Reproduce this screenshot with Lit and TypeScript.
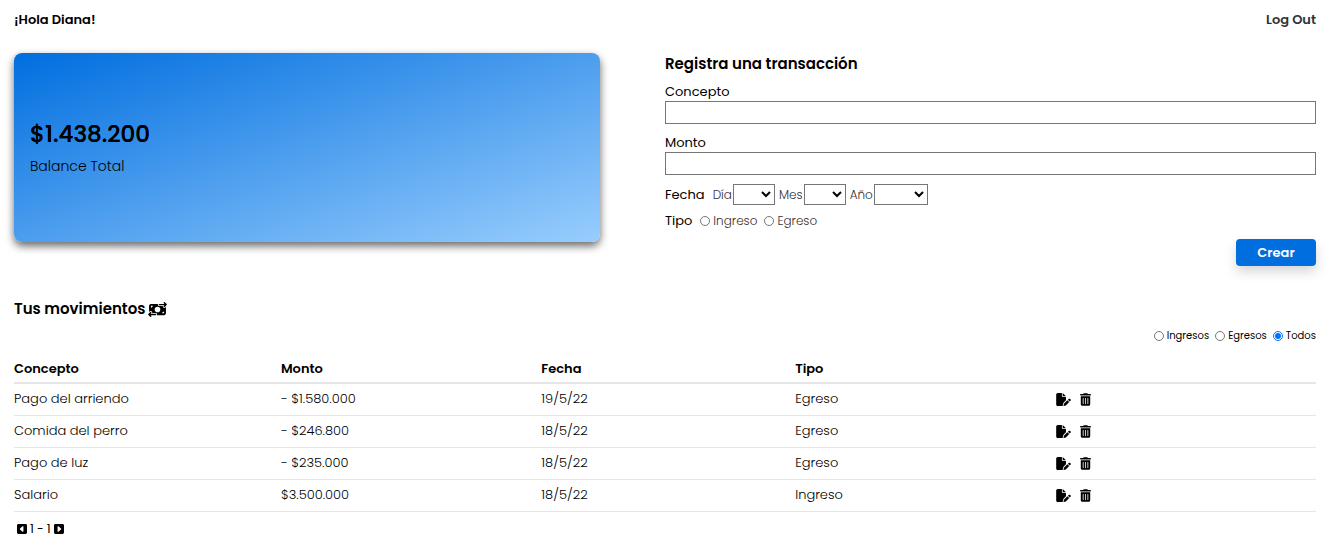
import { LitElement, html, css, svg } from "lit";
import { customElement, state } from "lit/decorators.js";

interface Movement {
  concept: string;
  amount: number;
  date: string;
  type: "Ingreso" | "Egreso";
}

const MOVEMENTS: Movement[] = [
  { concept: "Pago del arriendo", amount: 1580000, date: "19/5/22", type: "Egreso" },
  { concept: "Comida del perro", amount: 246800, date: "18/5/22", type: "Egreso" },
  { concept: "Pago de luz", amount: 235000, date: "18/5/22", type: "Egreso" },
  { concept: "Salario", amount: 3500000, date: "18/5/22", type: "Ingreso" },
];

const money = (value: number) =>
  "$" + String(value).replace(/\B(?=(\d{3})+(?!\d))/g, ".");

const transferIcon = svg`<svg class="icon-transfer" viewBox="0 0 640 512" aria-hidden="true"><path d="M535 41c-9.4-9.4-9.4-24.6 0-33.9s24.6-9.4 33.9 0l64 64c4.5 4.5 7 10.6 7 17s-2.5 12.5-7 17l-64 64c-9.4 9.4-24.6 9.4-33.9 0s-9.4-24.6 0-33.9l23-23L384 112c-13.3 0-24-10.7-24-24s10.7-24 24-24l174.1 0L535 41zM105 377l-23 23L256 400c13.3 0 24 10.7 24 24s-10.7 24-24 24L81.9 448l23 23c9.4 9.4 9.4 24.6 0 33.9s-24.6 9.4-33.9 0L7 441c-4.5-4.5-7-10.6-7-17s2.5-12.5 7-17l64-64c9.4-9.4 24.6-9.4 33.9 0s9.4 24.6 0 33.9zM96 64H337.9c-3.7 7.2-5.9 15.3-5.9 24c0 28.7 23.3 52 52 52l117.4 0c-4 17 .6 35.5 13.8 48.8c20.3 20.3 53.2 20.3 73.5 0L608 169.5V384c0 35.3-28.7 64-64 64H302.1c3.7-7.2 5.9-15.3 5.9-24c0-28.7-23.3-52-52-52l-117.4 0c4-17-.6-35.5-13.8-48.8c-20.3-20.3-53.2-20.3-73.5 0L32 342.5V128c0-35.3 28.7-64 64-64zm64 64H96v64c35.3 0 64-28.7 64-64zM544 320c-35.3 0-64 28.7-64 64h64V320zM320 352a96 96 0 1 0 0-192 96 96 0 1 0 0 192z"/></svg>`;

const editIcon = svg`<svg class="icon-edit" viewBox="0 0 576 512" aria-hidden="true"><path d="M0 64C0 28.7 28.7 0 64 0H224V128c0 17.7 14.3 32 32 32H384V285.7l-86.8 86.8c-10.3 10.3-17.5 23.1-21 37.2l-18.7 74.9c-2.3 9.2-1.8 18.8 1.3 27.5H64c-35.3 0-64-28.7-64-64V64zm384 64H256V0L384 128zM549.8 235.7l14.4 14.4c15.6 15.6 15.6 40.9 0 56.6l-29.4 29.4-71-71 29.4-29.4c15.6-15.6 40.9-15.6 56.6 0zM311.9 417L441.1 287.8l71 71L382.9 487.9c-4.1 4.1-9.2 7-14.9 8.4l-60.1 15c-5.5 1.4-11.2-.2-15.2-4.2s-5.6-9.7-4.2-15.2l15-60.1c1.4-5.6 4.3-10.8 8.4-14.9z"/></svg>`;

const trashIcon = svg`<svg class="icon-trash" viewBox="0 0 448 512" aria-hidden="true"><path fill-rule="evenodd" d="M135.2 17.7C140.6 6.8 151.7 0 163.8 0H284.2c12.1 0 23.2 6.8 28.6 17.7L320 32h96c17.7 0 32 14.3 32 32s-14.3 32-32 32H32C14.3 96 0 81.7 0 64S14.3 32 32 32h96l7.2-14.3zM32 128H416V448c0 35.3-28.7 64-64 64H96c-35.3 0-64-28.7-64-64V128zm96 64c-8.8 0-16 7.2-16 16V432c0 8.8 7.2 16 16 16s16-7.2 16-16V208c0-8.8-7.2-16-16-16zm96 0c-8.8 0-16 7.2-16 16V432c0 8.8 7.2 16 16 16s16-7.2 16-16V208c0-8.8-7.2-16-16-16zm96 0c-8.8 0-16 7.2-16 16V432c0 8.8 7.2 16 16 16s16-7.2 16-16V208c0-8.8-7.2-16-16-16z"/></svg>`;

const previousIcon = svg`<svg class="icon-page" viewBox="0 0 448 448" aria-hidden="true"><path fill-rule="evenodd" d="M64 0H384a64 64 0 0 1 64 64V384a64 64 0 0 1-64 64H64a64 64 0 0 1-64-64V64A64 64 0 0 1 64 0zM128 224a24 24 0 0 0 8 18L248 346a24 24 0 0 0 40-18V120a24 24 0 0 0-40-18L136 206a24 24 0 0 0-8 18z"/></svg>`;

const nextIcon = svg`<svg class="icon-page" viewBox="0 0 448 448" aria-hidden="true"><path fill-rule="evenodd" d="M64 0H384a64 64 0 0 1 64 64V384a64 64 0 0 1-64 64H64a64 64 0 0 1-64-64V64A64 64 0 0 1 64 0zM320 224a24 24 0 0 0-8-18L200 102a24 24 0 0 0-40 18V328a24 24 0 0 0 40 18L312 242a24 24 0 0 0 8-18z"/></svg>`;

const range = (from: number, count: number) =>
  Array.from({ length: count }, (_, i) => from + i);

@customElement("app-root")
export class AppRoot extends LitElement {
  static styles = css`
    :host {
      display: block;
      padding: 10px 19px 10px 14px;
      font-family: Poppins, Inter, "Open Sans", sans-serif;
      font-size: 13px;
      line-height: 20px;
      color: #000;
      background: #fff;
    }
    *, *::before, *::after { box-sizing: border-box; }
    h1, h2, p { margin: 0; }
    button, input, select { font: inherit; color: inherit; }
    svg { display: block; fill: currentColor; }
    .top { display: flex; justify-content: space-between; }
    .greeting, .logout, .title, .create, .table th { font-weight: 600; }
    .greeting { font-size: 13px; }
    .logout { color: #333; text-decoration: none; }
    .summary {
      display: flex;
      justify-content: space-between;
      align-items: flex-start;
      margin-top: 23px;
    }
    .card {
      width: 45%;
      padding: 64px 16px;
      border-radius: 8px;
      background: linear-gradient(to bottom right, #006edf, #98cdfd);
      box-shadow: 0 4px 8px rgba(0, 0, 0, 0.6);
    }
    .total { font-size: 23px; line-height: 34px; font-weight: 500; text-shadow: 0 0 0 currentColor; }
    .total-label { margin-top: 4px; font-size: 14px; line-height: 23px; font-weight: 300; }
    .form { width: 50%; display: flex; flex-direction: column; }
    .title { font-size: 15px; line-height: 22px; }
    .field { display: flex; flex-direction: column; margin-top: 10px; }
    .title + .field { margin-top: 8px; }
    .field-label { line-height: 18px; }
    .text-input {
      width: 100%;
      height: 23px;
      padding: 1px 4px;
      border: 1px solid #767676;
      border-radius: 0;
      background: #fff;
    }
    .row {
      display: flex;
      align-items: center;
      font-size: 12px;
      font-weight: 300;
      color: #333;
    }
    .row .field-label { font-size: 13px; font-weight: 400; color: #000; margin-right: 8px; }
    .dates { margin-top: 9px; }
    .kinds { margin-top: 6px; }
    .part { display: flex; align-items: center; gap: 1px; margin-right: 4px; }
    .select {
      width: 42px;
      height: 21px;
      padding: 0;
      border: 1px solid #767676;
      border-radius: 0;
      background: #fff;
      color: #000;
    }
    .select-year { width: 54px; }
    .choice { display: flex; align-items: center; gap: 3px; margin-right: 7px; }
    .radio { width: 10px; height: 10px; margin: 0; }
    .create {
      align-self: flex-end;
      width: 80px;
      height: 27px;
      margin-top: 8px;
      padding: 0;
      border: 0;
      border-radius: 4px;
      background: #006edf;
      color: #fff;
      font-size: 13px;
      box-shadow: 0 6px 12px rgba(0, 0, 0, 0.16);
    }
    .movements-title { display: flex; align-items: center; gap: 3px; margin-top: 32px; }
    .icon-transfer { width: 19px; height: 15px; }
    .filters {
      display: flex;
      justify-content: flex-end;
      gap: 6px;
      margin-top: 8px;
      font-size: 10px;
      line-height: 16px;
    }
    .filter { display: flex; align-items: center; gap: 3px; }
    .table {
      width: 100%;
      margin-top: 11px;
      table-layout: fixed;
      border-collapse: collapse;
      text-align: left;
    }
    .table th { height: 28px; padding: 0; border-bottom: 2px solid #e6e6e6; }
    .table td { height: 32px; padding: 0; font-weight: 300; border-bottom: 1px solid #e6e6e6; }
    .col-concept { width: 20.5%; }
    .col-amount { width: 20%; }
    .col-date { width: 19.5%; }
    .col-type { width: 20%; }
    .actions { display: flex; align-items: center; gap: 9px; }
    .icon-button {
      display: block;
      padding: 0;
      border: 0;
      background: none;
      cursor: pointer;
    }
    .icon-edit { width: 15px; height: 13px; }
    .icon-trash { width: 11px; height: 13px; }
    .pager { display: flex; align-items: center; gap: 3px; margin: 7px 3px 0; font-size: 12px; }
    .icon-page { width: 10px; height: 10px; }
  `;

  @state() private filter = "Todos";

  private get visible() {
    return MOVEMENTS.filter(
      (m) => this.filter === "Todos" || m.type + "s" === this.filter
    );
  }

  private dateSelect(id: string, label: string, values: number[], extra = "") {
    return html`<div class="part">
      <label for=${id}>${label}</label>
      <select class="select ${extra}" id=${id}>
        <option value=""></option>
        ${values.map((v) => html`<option>${v}</option>`)}
      </select>
    </div>`;
  }

  render() {
    const balance = MOVEMENTS.reduce(
      (sum, m) => sum + (m.type === "Ingreso" ? m.amount : -m.amount), 0
    );
    return html`
      <header class="top">
        <h1 class="greeting">¡Hola Diana!</h1>
        <a class="logout" href="#">Log Out</a>
      </header>
      <main>
        <section class="summary">
          <div class="card">
            <p class="total">${money(balance)}</p>
            <p class="total-label">Balance Total</p>
          </div>
          <form class="form" @submit=${(e: Event) => e.preventDefault()}>
            <h2 class="title">Registra una transacción</h2>
            <div class="field">
              <label class="field-label" for="concept">Concepto</label>
              <input class="text-input" id="concept" type="text" />
            </div>
            <div class="field">
              <label class="field-label" for="amount">Monto</label>
              <input class="text-input" id="amount" type="text" inputmode="numeric" />
            </div>
            <div class="row dates" role="group" aria-labelledby="date-label">
              <span class="field-label" id="date-label">Fecha</span>
              ${this.dateSelect("day", "Día", range(1, 31))}
              ${this.dateSelect("month", "Mes", range(1, 12))}
              ${this.dateSelect("year", "Año", range(2020, 5), "select-year")}
            </div>
            <div class="row kinds" role="radiogroup" aria-labelledby="kind-label">
              <span class="field-label" id="kind-label">Tipo</span>
              ${["Ingreso", "Egreso"].map((k) => html`<label class="choice">
                <input class="radio" type="radio" name="kind" value=${k} />${k}
              </label>`)}
            </div>
            <button class="create" type="submit">Crear</button>
          </form>
        </section>
        <section>
          <h2 class="title movements-title">Tus movimientos ${transferIcon}</h2>
          <div class="filters" role="radiogroup" aria-label="Filtro">
            ${["Ingresos", "Egresos", "Todos"].map((f) => html`<label class="filter">
              <input class="radio" type="radio" name="filter" .checked=${this.filter === f}
                @change=${() => (this.filter = f)} />${f}
            </label>`)}
          </div>
          <table class="table">
            <thead>
              <tr>
                <th class="col-concept">Concepto</th>
                <th class="col-amount">Monto</th>
                <th class="col-date">Fecha</th>
                <th class="col-type">Tipo</th>
                <th></th>
              </tr>
            </thead>
            <tbody>
              ${this.visible.map((m) => html`<tr>
                <td>${m.concept}</td>
                <td>${m.type === "Egreso" ? "- " : ""}${money(m.amount)}</td>
                <td>${m.date}</td>
                <td>${m.type}</td>
                <td>
                  <div class="actions">
                    <button class="icon-button" aria-label="Editar">${editIcon}</button>
                    <button class="icon-button" aria-label="Eliminar">${trashIcon}</button>
                  </div>
                </td>
              </tr>`)}
            </tbody>
          </table>
          <nav class="pager" aria-label="Páginas">
            <button class="icon-button" aria-label="Anterior">${previousIcon}</button>
            <span>1 - 1</span>
            <button class="icon-button" aria-label="Siguiente">${nextIcon}</button>
          </nav>
        </section>
      </main>
    `;
  }
}
